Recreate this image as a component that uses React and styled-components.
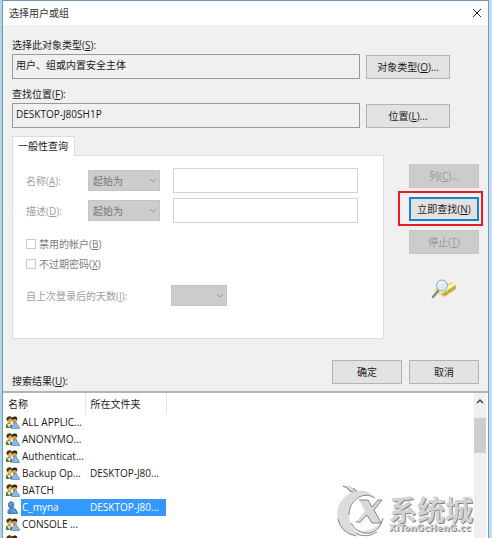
import styled, { createGlobalStyle } from 'styled-components';

const GlobalStyle = createGlobalStyle`
  * {
    box-sizing: border-box;
  }

  body {
    margin: 0;
    font-family: 'Open Sans', 'Noto Sans CJK SC', sans-serif;
    font-size: 10px;
    line-height: 16px;
    color: #1a1a1a;
  }

  button,
  input,
  select {
    font: inherit;
    color: inherit;
  }

  u {
    text-underline-offset: 1px;
  }
`;

const Desktop = styled.div`
  height: 100vh;
  min-height: 480px;
  display: flex;
  padding: 1px 3px 0 2px;
  background: linear-gradient(to right, #b5d3e6, #c3dcef);
  overflow: hidden;
`;

const Dialog = styled.main`
  position: relative;
  flex: 1;
  min-width: 0;
  display: flex;
  flex-direction: column;
  background-color: #f0f0f0;
  border: 1px solid #6f9ab8;
  border-width: 0 1px;
  box-shadow: 0 -1px 0 #6f9ab8;
`;

const TitleBar = styled.header`
  height: 24px;
  display: flex;
  align-items: center;
  justify-content: space-between;
  padding: 0 6px;
  background-color: #fff;
`;

const Title = styled.h1`
  margin: 0;
  font-size: 10px;
  font-weight: 400;
  color: #333;
`;

const CloseButton = styled.button`
  display: flex;
  padding: 0;
  border: none;
  background: none;
`;

const Form = styled.form`
  padding: 12px 9px 2px;
`;

const Label = styled.label`
  display: block;
  white-space: nowrap;
  color: ${props => (props.$muted ? '#a0a0a0' : 'inherit')};
`;

const FieldRow = styled.div`
  display: flex;
  align-items: center;
  gap: 6px;
  margin: 1px 29px 7px 0;
`;

const ReadOnlyField = styled.input`
  flex: 1;
  min-width: 0;
  height: 25px;
  padding: 0 3px 4px;
  border: 1px solid #999;
  background-color: #f0f0f0;
`;

const Button = styled.button`
  width: ${props => (props.$wide ? 84 : 70)}px;
  height: 24px;
  padding: 0;
  border: 1px solid #b2b2b2;
  background-color: #e2e2e2;
  white-space: nowrap;

  &:disabled {
    border-color: #c6c6c6;
    background-color: #cccccc;
    color: #999;
  }
`;

const PrimaryButton = styled(Button)`
  border: 2px solid #1683c9;
`;

const Query = styled.div`
  display: flex;
  gap: 25px;
  margin-top: 8px;
`;

const TabBox = styled.section`
  flex: 1;
  min-width: 0;
`;

const Tab = styled.button`
  display: block;
  position: relative;
  height: 20px;
  margin-bottom: -1px;
  padding: 0 6px 2px 5px;
  border: 1px solid #dcdcdc;
  border-bottom: none;
  background-color: #fff;
`;

const Panel = styled.div`
  height: 184px;
  padding: 12px 25px 0 13px;
  border: 1px solid #dcdcdc;
  background-color: #fff;
`;

const Criterion = styled.div`
  display: grid;
  grid-template-columns: 62px 72px 1fr;
  align-items: center;
  margin-bottom: 5px;
`;

const SelectBox = styled.div`
  display: grid;
  align-items: center;

  > * {
    grid-area: 1 / 1;
  }

  > svg {
    justify-self: end;
    margin-right: 3px;
    pointer-events: none;
  }
`;

const Select = styled.select`
  appearance: none;
  width: 100%;
  height: 21px;
  padding: 0 4px;
  border: 1px solid #c4c4c4;
  border-radius: 0;
  background-color: #cccccc;

  &:disabled {
    color: #777;
    opacity: 1;
  }
`;

const TextInput = styled.input`
  min-width: 0;
  height: 25px;
  margin-left: 13px;
  border: 1px solid #d2d2d2;
  background-color: #fff;
`;

const CheckList = styled.div`
  padding-top: 6px;
`;

const CheckLabel = styled.label`
  display: flex;
  align-items: center;
  gap: 3px;
  height: 20px;
  color: #7c7c7c;
`;

const Checkbox = styled.input`
  appearance: none;
  width: 10px;
  height: 10px;
  margin: 0;
  border: 1px solid #ccc;
  background-color: #fff;
`;

const DaysRow = styled.div`
  display: grid;
  grid-template-columns: 145px 56px;
  align-items: center;
  margin-top: 11px;
`;

const Actions = styled.div`
  width: 70px;
  display: flex;
  flex-direction: column;
  align-items: center;
  gap: 9px;
  padding-top: 28px;
`;

const Highlight = styled.div`
  position: relative;

  &::after {
    content: '';
    position: absolute;
    inset: -6px -4px -5px -11px;
    border: 2px solid #e81c22;
    pointer-events: none;
  }
`;

const SearchIcon = styled.svg`
  margin-top: 16px;
`;

const Footer = styled.div`
  display: flex;
  justify-content: flex-end;
  gap: 7px;
  margin-top: 21px;
`;

const ResultsLabel = styled.div`
  margin-top: -11px;
`;

const Results = styled.section`
  flex: 1;
  min-height: 0;
  display: flex;
  border-top: 2px solid #b4b4b4;
  background-color: #fff;
`;

const TableArea = styled.div`
  flex: 1;
  min-width: 0;
  overflow: hidden;
`;

const Table = styled.table`
  width: 163px;
  table-layout: fixed;
  border-collapse: collapse;
`;

const HeadCell = styled.th`
  width: ${props => props.$width}px;
  height: 21px;
  padding: 0 0 0 5px;
  border-right: 1px solid #e5e5e5;
  font-weight: 400;
  text-align: left;
`;

const Cell = styled.td`
  height: 17px;
  padding: 0;
  color: ${props => (props.$selected ? '#fff' : 'inherit')};
`;

const Entry = styled.div`
  display: flex;
  gap: 1px;
  padding-left: 3px;
`;

const EntryIcon = styled.svg`
  flex: none;
  margin-top: 2px;
`;

const EntryText = styled.span`
  flex: 1;
  height: 17px;
  padding-left: ${props => (props.$folder ? 5 : 1)}px;
  line-height: 17px;
  white-space: nowrap;
  background-color: ${props => (props.$selected ? '#3399ff' : 'transparent')};
`;

const FolderText = styled(EntryText)`
  display: block;
`;

const Scrollbar = styled.div`
  width: 12px;
  margin-right: 2px;
  display: flex;
  flex-direction: column;
  align-items: center;
  background-color: #f0f0f0;
`;

const ScrollUp = styled.button`
  display: flex;
  justify-content: center;
  width: 100%;
  height: 25px;
  padding: 5px 0 0;
  border: none;
  background: none;
`;

const ScrollThumb = styled.div`
  width: 100%;
  height: 35px;
  background-color: #cdcdcd;
`;

const Watermark = styled.div`
  position: absolute;
  right: 15px;
  bottom: 0;
  display: flex;
  gap: 3px;
  color: #d2d2d2;
  pointer-events: none;
`;

const WatermarkText = styled.div`
  display: flex;
  flex-direction: column;
  justify-content: flex-end;
  padding-bottom: 6px;
  font-weight: 700;
  text-shadow: 1px 1px 0 #858585;
`;

const WatermarkName = styled.span`
  font-family: 'Noto Sans CJK SC', sans-serif;
  font-size: 28px;
  line-height: 30px;
`;

const WatermarkSite = styled.span`
  font-family: 'DejaVu Sans', sans-serif;
  font-size: 9px;
  line-height: 8px;
`;

const Chevron = () => (
  <svg width="8" height="6" viewBox="0 0 8 6" fill="none" stroke="#999">
    <path d="M1 1l3 3 3-3" />
  </svg>
);

const GroupIcon = () => (
  <EntryIcon width="14" height="13" viewBox="0 0 14 13">
    <path d="M0 12V8.500Q1 6.500 4 7l2 2v3z" fill="#4e7a3c" />
    <path d="M1 2.500Q3-.5 6 1.500v4Q5 8 3 7.500 1 7 1 4z" fill="#e5b45a" />
    <path d="M.5 4V2Q2-.5 5 .5l1 1.500-3 1L2 5z" fill="#4a3517" />
    <path d="M6 3Q8 .5 10.500 2v4.500Q9 9 7 7.500z" fill="#d99a48" />
    <path d="M5.500 4.500V2Q7 0 9.500.5 12 1 11 5l-1-2-3 .2z" fill="#2c241b" />
    <path d="M1 8l2.500 4L5 8z" fill="#f4e3ad" />
    <path
      d="M5.500 12.500Q5 9.500 7.800 9 7 6.500 9.300 6.200 11.500 6.500 11 9q2.500.5 2.500 3.500z"
      fill="#8ebae8"
      stroke="#426f9f"
      strokeWidth=".6"
    />
  </EntryIcon>
);

const UserIcon = () => (
  <EntryIcon width="14" height="13" viewBox="0 0 14 13">
    <path
      d="M2 12.500Q1 9 4 7.500 1.800 5.500 2.500 2.500 4 0 6.500 1 8.800 2.500 7.500 5.500L7 7q4 1 4.500 5.500z"
      fill="#4b8fd0"
      stroke="#2a629c"
      strokeWidth=".7"
    />
    <path d="M4 3.500Q5 1.500 6.500 3M6 9q3 .5 3.500 2.500" stroke="#91c3ee" fill="none" />
  </EntryIcon>
);

const Swirl = () => (
  <svg width="49" height="54" viewBox="0 0 49 54">
    <path d="M6 2Q13 1 16 4q2 3 6 4-6 1-9-1Q10 3 6 2z" fill="#d6d6d6" />
    <path d="M6 2Q10 3 13 7q3 2 9 1M16 4q2 3 6 4" fill="none" stroke="#707070" />
    <path d="M38 14Q30 3 16 8C2 13-4 30 3 42q7 10 22 10Q12 44 12 31 13 13 29 11q5 0 9 3z" fill="#dcdcdc" />
    <path d="M1 35q3 14 18 17M38 14Q30 9 22 13 12 19 12 31" fill="none" stroke="#8a8a8a" />
    <path d="M14 39q6 10 18 7 11-3 14-13-1 11-12 16-12 4-20-10z" fill="#dedede" />
    <path d="M14 39q6 12 20 10 10-4 12-15M19 49q10 6 21-1" fill="none" stroke="#888" />
    <path d="M22 16h9l4 7 6-7h4l-8 10 7 13h-9l-5-8-7 7h-4l9-11z" fill="#d9d9d9" />
    <path d="M22 16h9l4 7 6-7h4M44 39h-9l-5-8-7 7h-4M45 16l-8 10 7 13" fill="none" stroke="#858585" />
  </svg>
);

const criteria = [
  { id: 'name', label: '名称', accessKey: 'A' },
  { id: 'description', label: '描述', accessKey: 'D' },
];

const entries = [
  { name: 'ALL APPLIC...' },
  { name: 'ANONYMO...' },
  { name: 'Authenticat...' },
  { name: 'Backup Op...', folder: 'DESKTOP-J80...' },
  { name: 'BATCH' },
  { name: 'C_myna', folder: 'DESKTOP-J80...', user: true, selected: true },
  { name: 'CONSOLE ...' },
  { name: '' },
];

const App = () => {
  return (
    <Desktop>
      <GlobalStyle />
      <Dialog>
        <TitleBar>
          <Title>选择用户或组</Title>
          <CloseButton type="button" aria-label="关闭">
            <svg width="10" height="10" viewBox="0 0 10 10" stroke="#222">
              <path d="M1 1l8 8M9 1L1 9" />
            </svg>
          </CloseButton>
        </TitleBar>

        <Form onSubmit={event => event.preventDefault()}>
          <Label htmlFor="object-type">
            选择此对象类型(<u>S</u>):
          </Label>
          <FieldRow>
            <ReadOnlyField id="object-type" readOnly value="用户、组或内置安全主体" />
            <Button type="button" $wide>
              对象类型(<u>O</u>)...
            </Button>
          </FieldRow>
          <Label htmlFor="location">
            查找位置(<u>F</u>):
          </Label>
          <FieldRow>
            <ReadOnlyField id="location" readOnly value="DESKTOP-J80SH1P" />
            <Button type="button" $wide>
              位置(<u>L</u>)...
            </Button>
          </FieldRow>

          <Query>
            <TabBox>
              <Tab type="button">一般性查询</Tab>
              <Panel>
                {criteria.map(({ id, label, accessKey }) => (
                  <Criterion key={id}>
                    <Label htmlFor={id} $muted>
                      {label}(<u>{accessKey}</u>):
                    </Label>
                    <SelectBox>
                      <Select disabled aria-label={label}>
                        <option>起始为</option>
                      </Select>
                      <Chevron />
                    </SelectBox>
                    <TextInput id={id} disabled />
                  </Criterion>
                ))}
                <CheckList>
                  <CheckLabel>
                    <Checkbox type="checkbox" disabled />
                    <span>
                      禁用的帐户(<u>B</u>)
                    </span>
                  </CheckLabel>
                  <CheckLabel>
                    <Checkbox type="checkbox" disabled />
                    <span>
                      不过期密码(<u>X</u>)
                    </span>
                  </CheckLabel>
                </CheckList>
                <DaysRow>
                  <Label htmlFor="days" $muted>
                    自上次登录后的天数(<u>I</u>):
                  </Label>
                  <SelectBox>
                    <Select id="days" disabled />
                    <Chevron />
                  </SelectBox>
                </DaysRow>
              </Panel>
            </TabBox>

            <Actions>
              <Button type="button" disabled>
                列(<u>C</u>)...
              </Button>
              <Highlight>
                <PrimaryButton type="submit">
                  立即查找(<u>N</u>)
                </PrimaryButton>
              </Highlight>
              <Button type="button" disabled>
                停止(<u>T</u>)
              </Button>
              <SearchIcon width="28" height="21" viewBox="0 0 28 21">
                <path d="M5 10L22 3l4 3-15 10-5-2z" fill="#e6dc7c" />
                <path d="M9 12L23 4l3 2-14 9z" fill="#faf5b5" />
                <path d="M11 15L26 6v4L14 18z" fill="#cdb54a" />
                <path d="M16 13v3M20 10v3M23 8v3" stroke="#8d843c" strokeWidth=".7" />
                <path d="M8 12l-5 6" stroke="#888" strokeWidth="2.500" strokeLinecap="round" />
                <circle cx="12" cy="6.500" r="5.500" fill="#d5ebf6" stroke="#8fa9b8" />
                <path d="M9 6q1-3 4-3" stroke="#fff" strokeWidth="1.500" fill="none" />
              </SearchIcon>
            </Actions>
          </Query>

          <Footer>
            <Button type="submit">确定</Button>
            <Button type="button">取消</Button>
          </Footer>
          <ResultsLabel id="results-label">
            搜索结果(<u>U</u>):
          </ResultsLabel>
        </Form>

        <Results>
          <TableArea>
            <Table aria-labelledby="results-label">
              <thead>
                <tr>
                  <HeadCell $width={82}>名称</HeadCell>
                  <HeadCell $width={81}>所在文件夹</HeadCell>
                </tr>
              </thead>
              <tbody>
                {entries.map(({ name, folder, user, selected }) => (
                  <tr key={name}>
                    <Cell $selected={selected}>
                      <Entry>
                        {user ? <UserIcon /> : <GroupIcon />}
                        <EntryText $selected={selected}>{name}</EntryText>
                      </Entry>
                    </Cell>
                    <Cell $selected={selected}>
                      <FolderText $folder $selected={selected}>
                        {folder}
                      </FolderText>
                    </Cell>
                  </tr>
                ))}
              </tbody>
            </Table>
          </TableArea>
          <Scrollbar>
            <ScrollUp type="button" aria-label="向上滚动">
              <svg width="8" height="6" viewBox="0 0 8 6" fill="none" stroke="#444" strokeWidth="1.500">
                <path d="M1 5l3-3 3 3" />
              </svg>
            </ScrollUp>
            <ScrollThumb />
          </Scrollbar>
        </Results>

        <Watermark>
          <Swirl />
          <WatermarkText>
            <WatermarkName>系统城</WatermarkName>
            <WatermarkSite>XiTonGcHenG.cc</WatermarkSite>
          </WatermarkText>
        </Watermark>
      </Dialog>
    </Desktop>
  );
};

export default App;
